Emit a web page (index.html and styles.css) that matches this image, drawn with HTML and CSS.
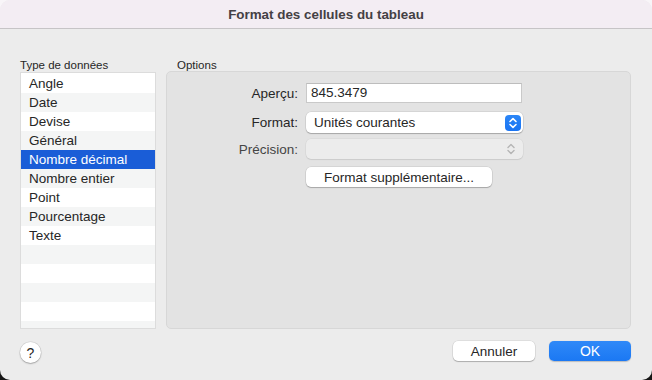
FILE: index.html
```html
<!DOCTYPE html>
<html lang="fr">
<head>
<meta charset="utf-8">
<title>Format des cellules du tableau</title>
<link rel="stylesheet" href="styles.css">
</head>
<body>
<div class="window">
  <div class="titlebar">Format des cellules du tableau</div>
  <div class="main">
    <div class="col-left">
      <div class="group-label">Type de données</div>
      <ul class="list">
        <li>Angle</li>
        <li>Date</li>
        <li>Devise</li>
        <li>Général</li>
        <li class="selected">Nombre décimal</li>
        <li>Nombre entier</li>
        <li>Point</li>
        <li>Pourcentage</li>
        <li>Texte</li>
        <li></li>
        <li></li>
        <li></li>
        <li></li>
        <li></li>
      </ul>
    </div>
    <div class="col-right">
      <div class="group-label options-label">Options</div>
      <div class="box">
        <div class="row row-apercu">
          <span class="lbl">Aperçu:</span>
          <div class="field">845.3479</div>
        </div>
        <div class="row row-format">
          <span class="lbl">Format:</span>
          <div class="popup">
            <span>Unités courantes</span>
            <span class="stepper">
              <svg width="16" height="16" viewBox="0 0 16 16"><path d="M5 6.5 L8 3.6 L11 6.5 M5 9.5 L8 12.4 L11 9.5" fill="none" stroke="#fff" stroke-width="1.6" stroke-linecap="round" stroke-linejoin="round"/></svg>
            </span>
          </div>
        </div>
        <div class="row row-precision">
          <span class="lbl disabled">Précision:</span>
          <div class="popup popup-disabled">
            <span></span>
            <span class="stepper stepper-disabled">
              <svg width="16" height="16" viewBox="0 0 16 16"><path d="M5 6.5 L8 3.6 L11 6.5 M5 9.5 L8 12.4 L11 9.5" fill="none" stroke="#b5b5b5" stroke-width="1.4" stroke-linecap="round" stroke-linejoin="round"/></svg>
            </span>
          </div>
        </div>
        <div class="row row-more">
          <span class="lbl"></span>
          <button class="btn btn-more">Format supplémentaire...</button>
        </div>
      </div>
    </div>
  </div>
  <div class="footer">
    <button class="help">?</button>
    <div class="actions">
      <button class="btn btn-action">Annuler</button>
      <button class="btn btn-action btn-default">OK</button>
    </div>
  </div>
</div>
</body>
</html>
```

FILE: styles.css
```css
html {
  background: linear-gradient(to bottom, #f8f5f8 0, #f8f5f8 50%, #161616 50%, #161616 100%);
  height: 100%;
}
body {
  margin: 0;
  font-family: "Liberation Sans", Arial, sans-serif;
  color: #262626;
}
.window {
  width: 652px;
  height: 380px;
  background: #ececec;
  border-radius: 10px;
  overflow: hidden;
  display: flex;
  flex-direction: column;
}
.titlebar {
  border-bottom: 1px solid #c6c4c6;
  background: #f3edf3;
  font-weight: bold;
  font-size: 13.4px;
  color: #444044;
  display: flex;
  align-items: center;
  justify-content: center;
  padding-top: 1px;
  box-sizing: border-box;
  height: 29px;
}
.main {
  display: flex;
  gap: 10px;
  padding: 29px 21px 0 20px;
}
.col-left {
  width: 136px;
  display: flex;
  flex-direction: column;
}
.col-right {
  width: 465px;
  display: flex;
  flex-direction: column;
}
.group-label {
  font-size: 11.5px;
  height: 14px;
  line-height: 14px;
  color: #262626;
}
.options-label {
  height: 13px;
  padding-left: 11px;
}
.list {
  list-style: none;
  margin: 0;
  padding: 1px 0 0 0;
  height: 257px;
  box-sizing: border-box;
  border: 1px solid #dcdcdc;
  background: #fff;
  overflow: hidden;
}
.list li {
  height: 19px;
  line-height: 19px;
  font-size: 13.5px;
  padding-left: 8px;
  white-space: nowrap;
}
.list li:nth-child(even) {
  background: #f4f5f5;
}
.list li.selected {
  background: #1a5dd7;
  color: #fff;
}
.box {
  height: 258px;
  box-sizing: border-box;
  border: 1px solid #d7d7d7;
  border-radius: 5px;
  background: #e3e3e3;
  padding-top: 11px;
  display: flex;
  flex-direction: column;
}
.row {
  display: flex;
  align-items: center;
  gap: 8px;
}
.row-format { margin-top: 9px; }
.row-precision { margin-top: 6px; }
.row-more { margin-top: 8px; }
.lbl {
  width: 131px;
  text-align: right;
  font-size: 13.5px;
  color: #262626;
}
.lbl.disabled {
  color: #454545;
}
.field {
  width: 216px;
  height: 20px;
  box-sizing: border-box;
  border: 1px solid #c9c9c9;
  border-top-color: #bdbdbd;
  background: #fff;
  font-size: 13.5px;
  line-height: 18px;
  padding-left: 4px;
}
.popup {
  width: 217px;
  height: 21px;
  box-sizing: border-box;
  background: #fff;
  border-radius: 5px;
  box-shadow: 0 0 0 0.5px rgba(0,0,0,0.12), 0 1px 1px rgba(0,0,0,0.22);
  display: flex;
  align-items: center;
  justify-content: space-between;
  padding: 0 2px 0 8px;
  font-size: 13.5px;
}
.popup-disabled {
  height: 20px;
  background: #ececec;
  box-shadow: 0 0 0 0.5px rgba(0,0,0,0.06), 0 1px 1px rgba(0,0,0,0.08);
  padding-right: 4px;
}
.stepper {
  width: 16px;
  height: 16px;
  border-radius: 4px;
  background: linear-gradient(to bottom, #2b86f7, #1a74f2);
  display: flex;
}
.stepper-disabled {
  background: none;
}
.btn {
  font-family: inherit;
  font-size: 13.5px;
  color: #262626;
  background: #fff;
  border: none;
  border-radius: 5px;
  box-shadow: 0 0 0 0.5px rgba(0,0,0,0.12), 0 1px 1px rgba(0,0,0,0.22);
  height: 20px;
  padding: 0;
  margin: 0;
}
.btn-more {
  width: 186px;
}
.footer {
  display: flex;
  justify-content: space-between;
  align-items: flex-start;
  padding: 12px 21px 0 20px;
}
.help {
  width: 21px;
  height: 21px;
  border-radius: 50%;
  border: none;
  background: #fff;
  box-shadow: 0 0 0 0.5px rgba(0,0,0,0.12), 0 1px 1.5px rgba(0,0,0,0.25);
  font-family: inherit;
  font-size: 14px;
  color: #262626;
  padding: 0;
  margin-top: 1px;
}
.actions {
  display: flex;
  gap: 14px;
}
.btn-action {
  width: 82px;
}
.btn-default {
  background: linear-gradient(to bottom, #2f89f8, #1b78f3);
  color: #fff;
  box-shadow: 0 0.5px 1px rgba(0,0,0,0.2);
  font-size: 14px;
}
```
